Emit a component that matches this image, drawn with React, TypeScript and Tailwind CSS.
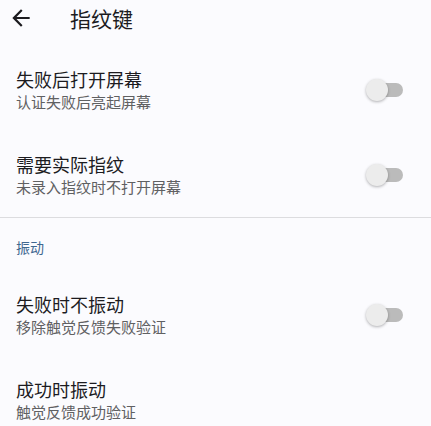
export default function App() {
  return (
    <div
      className="w-[431px] h-[426px] overflow-hidden bg-[#fbfbfe] text-[#1c1b1f]"
      style={{ fontFamily: '"Noto Sans CJK SC", "Noto Sans", sans-serif' }}
    >
      {/* Top bar */}
      <div className="flex items-center h-[36px]">
        <svg viewBox="0 0 24 24" className="w-[26px] h-[26px] ml-[8px] fill-[#1c1b1f]">
          <path d="M20 11H7.83l5.59-5.59L12 4l-8 8 8 8 1.41-1.41L7.83 13H20v-2z" />
        </svg>
        <h1 className="ml-[36px] text-[21px] leading-[28px] font-normal">指纹键</h1>
      </div>

      <div className="mt-[11px]">
        <PrefRow title="失败后打开屏幕" summary="认证失败后亮起屏幕" toggle />
        <PrefRow title="需要实际指纹" summary="未录入指纹时不打开屏幕" toggle />
      </div>

      <div className="h-px bg-[#dcdcdf]" />

      <div className="h-[54px] pt-[16px] pl-[16px]">
        <span className="text-[14px] leading-[20px] text-[#3f6790]">振动</span>
      </div>

      <PrefRow title="失败时不振动" summary="移除触觉反馈失败验证" toggle />
      <PrefRow title="成功时振动" summary="触觉反馈成功验证" />
    </div>
  );
}

function PrefRow({ title, summary, toggle }: { title: string; summary: string; toggle?: boolean }) {
  return (
    <div className="flex items-center h-[85px] pl-[16px] pr-[28px]">
      <div className="flex-1 flex flex-col">
        <span className="text-[18px] leading-[24px]">{title}</span>
        <span className="text-[15px] leading-[22px] text-[#5f6062]">{summary}</span>
      </div>
      {toggle && <Switch />}
    </div>
  );
}

function Switch() {
  return (
    <div className="relative w-[37px] h-[22px]">
      <div className="absolute right-0 top-[4px] w-[34px] h-[14px] rounded-full bg-[#bbbbbb]" />
      <div className="absolute left-0 top-0 w-[22px] h-[22px] rounded-full bg-[#ececec] shadow-[0_1px_3px_rgba(0,0,0,0.3)]" />
    </div>
  );
}
